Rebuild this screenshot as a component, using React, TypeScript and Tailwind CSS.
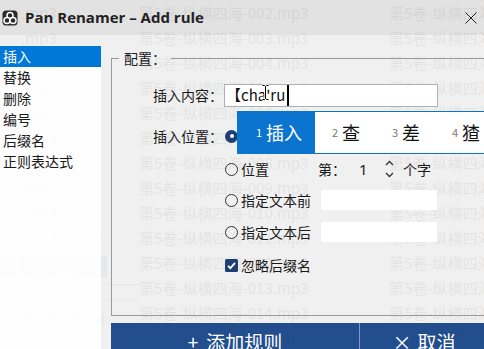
import React from "react";

const files = Array.from({ length: 14 }, (_, i) => String(i + 2).padStart(3, "0"));
const menu = ["插入", "替换", "删除", "编号", "后缀名", "正则表达式"];
const candidates = [
  { n: "1", t: "插入" },
  { n: "2", t: "查" },
  { n: "3", t: "差" },
  { n: "4", t: "猹" },
];

function AppIcon() {
  return (
    <svg width="16" height="16" viewBox="0 0 16 16" className="ml-[2px] shrink-0">
      <rect x="0.5" y="0.5" width="15" height="15" rx="3.5" fill="#2a2a2a" />
      <circle cx="8" cy="5.6" r="3" fill="#2a2a2a" stroke="#fff" strokeWidth="1.5" />
      <circle cx="5" cy="10.4" r="3" fill="#2a2a2a" stroke="#fff" strokeWidth="1.5" />
      <circle cx="11" cy="10.4" r="3" fill="#2a2a2a" stroke="#fff" strokeWidth="1.5" />
    </svg>
  );
}

function Radio({ on = false }: { on?: boolean }) {
  return on ? (
    <span className="ml-[1px] w-[13px] h-[13px] rounded-full bg-[#1e3f73] flex items-center justify-center shrink-0">
      <span className="w-[4px] h-[4px] rounded-full bg-white" />
    </span>
  ) : (
    <span className="ml-[1px] w-[13px] h-[13px] rounded-full border border-[#333] shrink-0" />
  );
}

// background window, seen through the dialog
function Behind() {
  return (
    <div className="absolute inset-0 flex text-[#7a7a7a] text-[15px] font-['Noto_Sans_CJK_SC','Noto_Sans',sans-serif]">
      <div className="w-[139px] shrink-0 flex flex-col">
        {files.slice(0, 10).map((n) => (
          <div key={n} className="h-[25px] leading-[25px] pl-[21px] pr-[36px] flex justify-between items-center">
            <span>.mp3</span>
            {n === "011" && (
              <svg width="10" height="6" viewBox="0 0 10 6">
                <polyline points="1,1 5,5 9,1" fill="none" stroke="#888" strokeWidth="1.2" />
              </svg>
            )}
          </div>
        ))}
        <div className="mt-[5px] h-[23px] flex gap-[2px] text-white text-[14px]">
          <div className="w-[17px] bg-[#a7adb6] flex items-center justify-center">→</div>
          <div className="w-[88px] bg-[#a7adb6] flex items-center justify-center">导入全部 →</div>
        </div>
        <div className="mt-[6px] border-b border-[#aaa]" />
        <div className="mt-[15px] border-b border-[#bbb]" />
        <div className="mt-[8px] pl-[21px] text-[12px] leading-[20px]">未添加命名规则</div>
      </div>
      <div className="w-[250px] shrink-0 flex flex-col">
        {files.map((n) => (
          <div key={n} className="h-[25px] leading-[25px] whitespace-nowrap">第5卷-纵横四海-{n}.mp3</div>
        ))}
      </div>
      <div className="flex-1 min-w-0 flex flex-col overflow-hidden">
        {files.map((n) => (
          <div key={n} className="h-[25px] leading-[25px] whitespace-nowrap">第5卷-纵横四海-{n}.mp3</div>
        ))}
      </div>
    </div>
  );
}

export default function App() {
  return (
    <div className="relative w-[484px] h-[349px] overflow-hidden bg-white text-[#1a1a1a] font-['Noto_Sans_CJK_SC','Noto_Sans',sans-serif]">
      <Behind />

      <div className="absolute inset-0 flex flex-col">
        <div className="h-[35px] shrink-0 flex items-center bg-[#dfdfdf]/90">
          <AppIcon />
          <span className="ml-[7px] text-[15px] font-bold text-[#222] font-['Open_Sans',sans-serif]">
            Pan Renamer – Add rule
          </span>
          <svg width="12" height="12" viewBox="0 0 12 12" className="ml-auto mr-[7px]">
            <path d="M0.5 0.5 L11.5 11.5 M11.5 0.5 L0.5 11.5" stroke="#222" strokeWidth="1" />
          </svg>
        </div>

        <div className="flex-1 min-h-0 flex bg-[#eeeeee]/90">
          <div className="w-[101px] shrink-0 mt-[11px] bg-white/90 text-[14px]">
            {menu.map((m, i) => (
              <div
                key={m}
                className={`h-[21px] leading-[21px] px-[3px] ${i === 0 ? "bg-[#0078d7] text-white" : ""}`}
              >
                {m}
              </div>
            ))}
          </div>

          <div className="flex-1 min-w-0 flex flex-col pl-[10px] pt-[13px]">
            <fieldset className="h-[268px] shrink-0 border border-r-0 border-[#9a9a9a] text-[14px]">
              <legend className="ml-[7px] px-[5px] leading-[20px]">配置：</legend>
              <div className="pl-[41px] flex flex-col">
                <div className="mt-[16px] h-[23px] flex items-center">
                  <span className="w-[71px] shrink-0">插入内容：</span>
                  <div className="w-[214px] h-[23px] border border-[#b0b0b0] bg-white flex items-center pl-[1px] text-[15px] text-[#111]">
                    <span>【cha'ru</span>
                    <span className="ml-[2px] w-[2px] h-[21px] bg-black" />
                  </div>
                </div>
                <div className="mt-[19px] h-[20px] flex items-center">
                  <span className="w-[71px] shrink-0">插入位置：</span>
                  <Radio on />
                </div>
                <div className="mt-[13px] h-[20px] ml-[71px] flex items-center">
                  <div className="w-[94px] flex items-center">
                    <Radio />
                    <span className="ml-[3px]">位置</span>
                  </div>
                  <span className="w-[41px]">第：</span>
                  <span className="w-[26px] text-[15px] font-['Noto_Sans',sans-serif]">1</span>
                  <svg width="18" height="20" viewBox="0 0 18 20">
                    <polyline points="1,6 4.5,2.5 8,6" fill="none" stroke="#333" strokeWidth="1.3" />
                    <polyline points="1,14 4.5,17.5 8,14" fill="none" stroke="#333" strokeWidth="1.3" />
                  </svg>
                  <span>个字</span>
                </div>
                <div className="mt-[11px] h-[20px] ml-[71px] flex items-center">
                  <div className="w-[97px] flex items-center">
                    <Radio />
                    <span className="ml-[3px]">指定文本前</span>
                  </div>
                  <div className="w-[116px] h-[20px] bg-white" />
                </div>
                <div className="mt-[12px] h-[20px] ml-[71px] flex items-center">
                  <div className="w-[97px] flex items-center">
                    <Radio />
                    <span className="ml-[3px]">指定文本后</span>
                  </div>
                  <div className="w-[116px] h-[20px] bg-white" />
                </div>
                <div className="mt-[13px] h-[20px] ml-[71px] flex items-center">
                  <svg width="13" height="13" viewBox="0 0 13 13" className="ml-[1px] shrink-0">
                    <rect width="13" height="13" rx="1.5" fill="#1e3f73" />
                    <polyline points="3,6.8 5.4,9.2 10,3.8" fill="none" stroke="#fff" strokeWidth="1.8" />
                  </svg>
                  <span className="ml-[3px]">忽略后缀名</span>
                </div>
              </div>
            </fieldset>

            <div className="mt-[7px] h-[38px] shrink-0 flex text-white text-[19px]">
              <div className="w-[248px] shrink-0 flex items-center justify-center gap-[8px] bg-[#0b3c83]/90">
                <span>+</span>
                <span>添加规则</span>
              </div>
              <div className="w-[129px] shrink-0 flex items-center justify-center gap-[6px] border-l border-[#7d98c2] bg-[#0b3c83]/90">
                <span>×</span>
                <span>取消</span>
              </div>
            </div>
          </div>
        </div>
      </div>

      {/* IME candidate window */}
      <div className="absolute left-[237px] top-[111px] w-[260px] h-[43px] border border-[#0a74cf] bg-white flex">
        {candidates.map((c, i) => (
          <div
            key={c.n}
            className={`shrink-0 flex items-center gap-[4px] ${
              i === 0 ? "w-[77px] pl-[18px] bg-[#0a74cf] text-white" : "w-[60px] pl-[17px] text-[#111]"
            }`}
          >
            <span className={`text-[11px] ${i === 0 ? "text-white" : "text-[#777]"}`}>{c.n}</span>
            <span className="text-[18px]">{c.t}</span>
          </div>
        ))}
      </div>

      {/* mouse I-beam */}
      <svg width="9" height="17" viewBox="0 0 9 17" className="absolute left-[261px] top-[84px]">
        <path d="M1.5 1.5 H3.5 L4.5 2.5 L5.5 1.5 H7.5 M4.5 2.5 V14.5 M1.5 15.5 H3.5 L4.5 14.5 L5.5 15.5 H7.5" fill="none" stroke="#fff" strokeWidth="2.6" />
        <path d="M1.5 1.5 H3.5 L4.5 2.5 L5.5 1.5 H7.5 M4.5 2.5 V14.5 M1.5 15.5 H3.5 L4.5 14.5 L5.5 15.5 H7.5" fill="none" stroke="#000" strokeWidth="1" />
      </svg>
    </div>
  );
}
